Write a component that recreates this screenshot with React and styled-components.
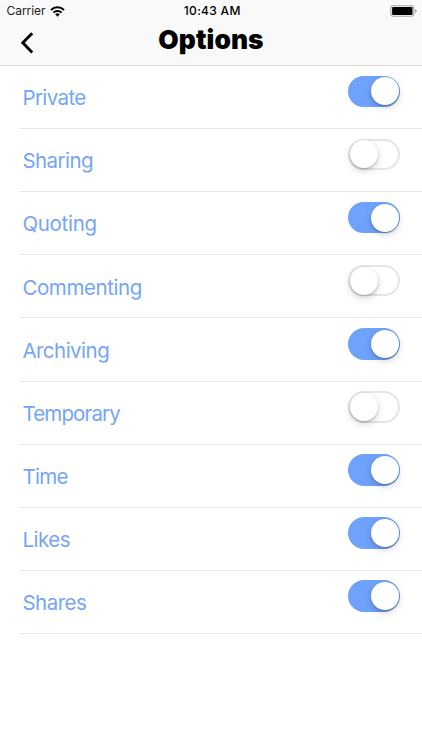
import React, { useState } from "react";
import styled, { createGlobalStyle } from "styled-components";

const initialOptions = [
    { name: "Private", enabled: true, spacing: "-0.6px" },
    { name: "Sharing", enabled: false, spacing: "-0.55px" },
    { name: "Quoting", enabled: true, spacing: "-0.3px" },
    { name: "Commenting", enabled: false, spacing: "-0.4px" },
    { name: "Archiving", enabled: true, spacing: "-0.52px" },
    { name: "Temporary", enabled: false, spacing: "-0.85px" },
    { name: "Time", enabled: true, spacing: "-0.7px" },
    { name: "Likes", enabled: true, spacing: "-0.5px" },
    { name: "Shares", enabled: true, spacing: "-0.5px" },
];

function App() {
    const [options, setOptions] = useState(initialOptions);

    function toggleOption(name) {
        setOptions(
            options.map((option) =>
                option.name === name
                    ? { ...option, enabled: !option.enabled }
                    : option
            )
        );
    }

    return (
        <Screen>
            <GlobalStyle />
            <Header>
                <StatusBar>
                    <Carrier>
                        Carrier
                        <WifiIcon />
                    </Carrier>
                    <Time>10:43 AM</Time>
                    <BatteryIcon />
                </StatusBar>
                <NavBar>
                    <BackButton type="button" aria-label="Back">
                        <svg width="14" height="22" viewBox="0 0 14 22">
                            <path
                                d="M12.2 1.2 2.8 10.8 12.2 20.4"
                                fill="none"
                                stroke="#000"
                                strokeWidth="2.9"
                            />
                        </svg>
                    </BackButton>
                    <Title>Options</Title>
                </NavBar>
            </Header>
            <List>
                {options.map((option) => (
                    <Row key={option.name}>
                        <Label $spacing={option.spacing}>{option.name}</Label>
                        <Toggle
                            type="button"
                            role="switch"
                            aria-label={option.name}
                            aria-checked={option.enabled}
                            $on={option.enabled}
                            onClick={() => toggleOption(option.name)}
                        >
                            <Knob />
                        </Toggle>
                    </Row>
                ))}
            </List>
        </Screen>
    );
}

function WifiIcon() {
    return (
        <svg width="15" height="11" viewBox="0 0 15 11">
            <g fill="none" stroke="#000" strokeWidth="2">
                <path d="M1 4a9.2 9.2 0 0 1 13 0" />
                <path d="M3.4 6.6a5.8 5.8 0 0 1 8.2 0" />
            </g>
            <path d="M5.2 8.3a3.3 3.3 0 0 1 4.6 0L7.5 10.7z" fill="#000" />
        </svg>
    );
}

function BatteryIcon() {
    return (
        <svg width="28" height="12" viewBox="0 0 28 12">
            <rect
                x="0.8"
                y="0.8"
                width="23"
                height="10.4"
                rx="2.4"
                fill="none"
                stroke="#a6a6a6"
                strokeWidth="1.1"
            />
            <rect x="2.1" y="2.1" width="20.4" height="7.8" rx="1" fill="#000" />
            <path d="M25 4.1q1.7.5 1.7 1.9T25 7.9z" fill="#a6a6a6" />
        </svg>
    );
}

const GlobalStyle = createGlobalStyle`
    body {
        margin: 0;
        background-color: #ffffff;
        font-family: Inter, "Liberation Sans", sans-serif;
    }
    * {
        box-sizing: border-box;
    }
    svg {
        display: block;
    }
`;

const Screen = styled.div`
    width: 422px;
    height: 750px;
    overflow: hidden;
    background-color: #ffffff;
`;

const Header = styled.header`
    height: 66px;
    background-color: #f9f9f9;
    border-bottom: 1px solid #dadada;
`;

const StatusBar = styled.div`
    display: grid;
    grid-template-columns: 1fr auto 1fr;
    align-items: center;
    height: 22px;
    padding: 0 4px 0 6.5px;
    font-size: 12px;
    line-height: 22px;
    color: #000000;

    > :last-child {
        justify-self: end;
    }
`;

const Carrier = styled.div`
    display: flex;
    align-items: center;
    gap: 5px;
    letter-spacing: -0.05px;
    color: #222222;
`;

const Time = styled.div`
    font-weight: 500;
    letter-spacing: 0.3px;
`;

const NavBar = styled.div`
    display: grid;
    grid-template-columns: 60px 1fr 60px;
    height: 43px;
`;

const BackButton = styled.button`
    padding: 10px 0 0 20px;
    border: none;
    background: none;
    cursor: pointer;
    display: flex;
    align-items: flex-start;
`;

const Title = styled.h1`
    margin: 0;
    font-size: 26.3px;
    font-weight: 900;
    line-height: 36px;
    letter-spacing: 0.1px;
    text-align: center;
    color: #000000;
`;

const List = styled.ul`
    margin: 0;
    padding: 0 0 0 20px;
    list-style: none;
`;

const Row = styled.li`
    display: flex;
    justify-content: space-between;
    align-items: flex-start;
    height: 63.12px;
    padding: 9.6px 22px 0 2.4px;
    border-bottom: 1px solid #e6e6e8;
`;

const Label = styled.span`
    padding-top: 9.6px;
    font-size: 20.5px;
    line-height: 25px;
    letter-spacing: ${(props) => props.$spacing};
    color: #75a5f4;
`;

const Toggle = styled.button`
    display: flex;
    align-items: center;
    justify-content: ${(props) => (props.$on ? "flex-end" : "flex-start")};
    width: 52px;
    height: 31.5px;
    padding: 0;
    border: 2px solid ${(props) => (props.$on ? "#6fa2fc" : "#e5e5e5")};
    border-right-width: ${(props) => (props.$on ? "1px" : "2px")};
    border-radius: 16px;
    background-color: ${(props) => (props.$on ? "#6fa2fc" : "#ffffff")};
    cursor: pointer;
`;

const Knob = styled.span`
    width: 28px;
    height: 28px;
    border-radius: 50%;
    background-color: #ffffff;
    box-shadow: 0 3px 7px rgba(0, 0, 0, 0.16), 0 1px 2px rgba(0, 0, 0, 0.22);
`;

export default App;
